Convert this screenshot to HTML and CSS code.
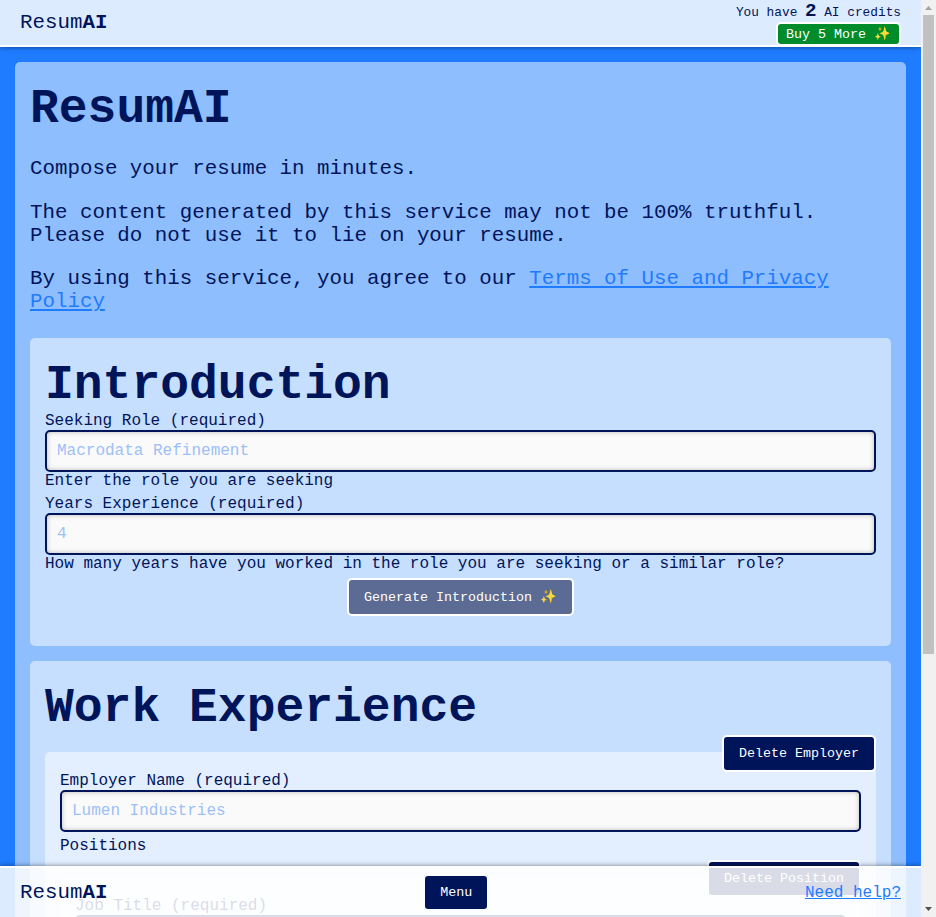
FILE: index.html
```html
<!DOCTYPE html>
<html lang="en">
<head>
<meta charset="utf-8">
<title>ResumAI</title>
<link rel="stylesheet" href="styles.css">
</head>
<body>
<div class="window">
  <div class="page">
    <header class="topbar">
      <div class="brand">Resum<b>AI</b></div>
      <div class="credits">
        <div class="credit-count">You have <b>2</b> AI credits</div>
        <button class="buy">Buy 5 More ✨</button>
      </div>
    </header>
    <main class="panel">
      <h1>ResumAI</h1>
      <div class="intro">
        <p>Compose your resume in minutes.</p>
        <p>The content generated by this service may not be 100% truthful. Please do not use it to lie on your resume.</p>
        <p>By using this service, you agree to our <a href="#">Terms of Use and Privacy Policy</a></p>
      </div>
      <section class="card introduction">
        <h1>Introduction</h1>
        <div class="field">
          <label for="role">Seeking Role (required)</label>
          <input id="role" placeholder="Macrodata Refinement">
          <div>Enter the role you are seeking</div>
        </div>
        <div class="field">
          <label for="years">Years Experience (required)</label>
          <input id="years" placeholder="4">
          <div>How many years have you worked in the role you are seeking or a similar role?</div>
        </div>
        <button class="btn generate" disabled>Generate Introduction ✨</button>
      </section>
      <section class="card">
        <h1>Work Experience</h1>
        <div class="card employer">
          <button class="btn delete">Delete Employer</button>
          <div class="field">
            <label for="employer">Employer Name (required)</label>
            <input id="employer" placeholder="Lumen Industries">
          </div>
          <div>Positions</div>
          <div class="card position">
            <button class="btn delete">Delete Position</button>
            <div class="field">
              <label for="job">Job Title (required)</label>
              <input id="job">
            </div>
          </div>
        </div>
      </section>
    </main>
    <footer class="bottombar">
      <div class="brand">Resum<b>AI</b></div>
      <button class="menu">Menu</button>
      <a class="help" href="#">Need help?</a>
    </footer>
  </div>
  <div class="scrollbar">
    <svg width="15" height="15" viewBox="0 0 15 15"><path d="M4 10h7L7.500 6z" fill="#a3a3a3"/></svg>
    <div class="thumb"></div>
    <svg width="15" height="15" viewBox="0 0 15 15"><path d="M4 5h7L7.500 9z" fill="#505050"/></svg>
  </div>
</div>
</body>
</html>
```
FILE: styles.css
```css
* { box-sizing: border-box; }

body {
  margin: 0;
  height: 917px;
  overflow: hidden;
  color: #00145a;
  font: 16px/18px "Liberation Mono", monospace;
}

.window {
  display: grid;
  grid-template-columns: 1fr 15px;
  height: 917px;
}

.page {
  position: relative;
  height: 917px;
  overflow: hidden;
  background: #1f7cff;
}

a { color: #1f7cff; }

.topbar, .bottombar {
  position: absolute;
  left: 0;
  right: 0;
  z-index: 2;
  display: flex;
  justify-content: space-between;
  background: rgba(255, 255, 255, .85);
  padding: 0 20px;
}

.topbar {
  top: 0;
  height: 47px;
  border-bottom: 2px solid #fff;
  box-shadow: 0 0 5px rgba(0, 0, 0, .5);
}

.bottombar {
  bottom: 0;
  height: 51px;
  align-items: center;
  border-top: 2px solid #fff;
  box-shadow: 0 0 5px rgba(0, 0, 0, .5);
}

.brand { font-size: 20.8px; line-height: 45px; }

.credits {
  display: flex;
  flex-direction: column;
  align-items: flex-end;
}

.credit-count { font-size: 12.8px; line-height: 22px; height: 22px; }
.credit-count b { font-size: 19.2px; }

button {
  font: 13.333px/15px "Liberation Mono", monospace;
  color: #fff;
  border-radius: 5px;
  white-space: nowrap;
}

.buy {
  height: 24px;
  flex-shrink: 0;
  padding: 0 8px;
  border: 2px solid #fff;
  background: #008c2a;
}

.menu {
  width: 62px;
  height: 33px;
  padding: 0;
  border: 0;
  border-radius: 3px;
  background: #00145a;
}

.panel {
  margin: 62px 15px 0;
  padding: 15px;
  height: 1200px;
  border-radius: 5px;
  background: rgba(255, 255, 255, .5);
}

h1 {
  margin: 5px 0 0;
  font-size: 48px;
  line-height: 54px;
}

.intro {
  height: 202px;
  padding-top: 1px;
  font-size: 20.8px;
  line-height: 23px;
}

.intro p { margin: 0 0 20px; }
.intro p:first-child { margin: 20px 0 21px; }

.card {
  padding: 15px;
  border-radius: 5px;
  background: rgba(255, 255, 255, .5);
}

.introduction { height: 308px; margin-bottom: 15px; }

.field { margin-bottom: 5px; }
.field label { display: block; }

input {
  display: block;
  width: 100%;
  height: 42px;
  padding: 0 10px;
  border: 2px solid #00145a;
  border-radius: 5px;
  background: #fafafa;
  box-shadow: inset 0 0 5px rgba(0, 0, 0, .25);
  font: 16px "Liberation Mono", monospace;
}

input::placeholder { color: #9dbff8; opacity: 1; }

.btn {
  display: block;
  height: 37px;
  padding: 0 15px;
  border: 2px solid #fff;
  background: #00145a;
}

.generate { height: 38px; margin: 0 auto; background: #5c6b93; }

.employer { position: relative; margin-top: 17px; padding-top: 20px; }
.position { position: relative; margin-top: 22px; padding-top: 20px; }

.delete { position: absolute; top: -17px; right: 0; }

.scrollbar {
  display: flex;
  flex-direction: column;
  justify-content: space-between;
  background: #f1f1f1;
}

.scrollbar svg { display: block; }

.thumb {
  width: 11px;
  height: 639px;
  margin: 0 2px auto;
  background: #c1c1c1;
}
```
